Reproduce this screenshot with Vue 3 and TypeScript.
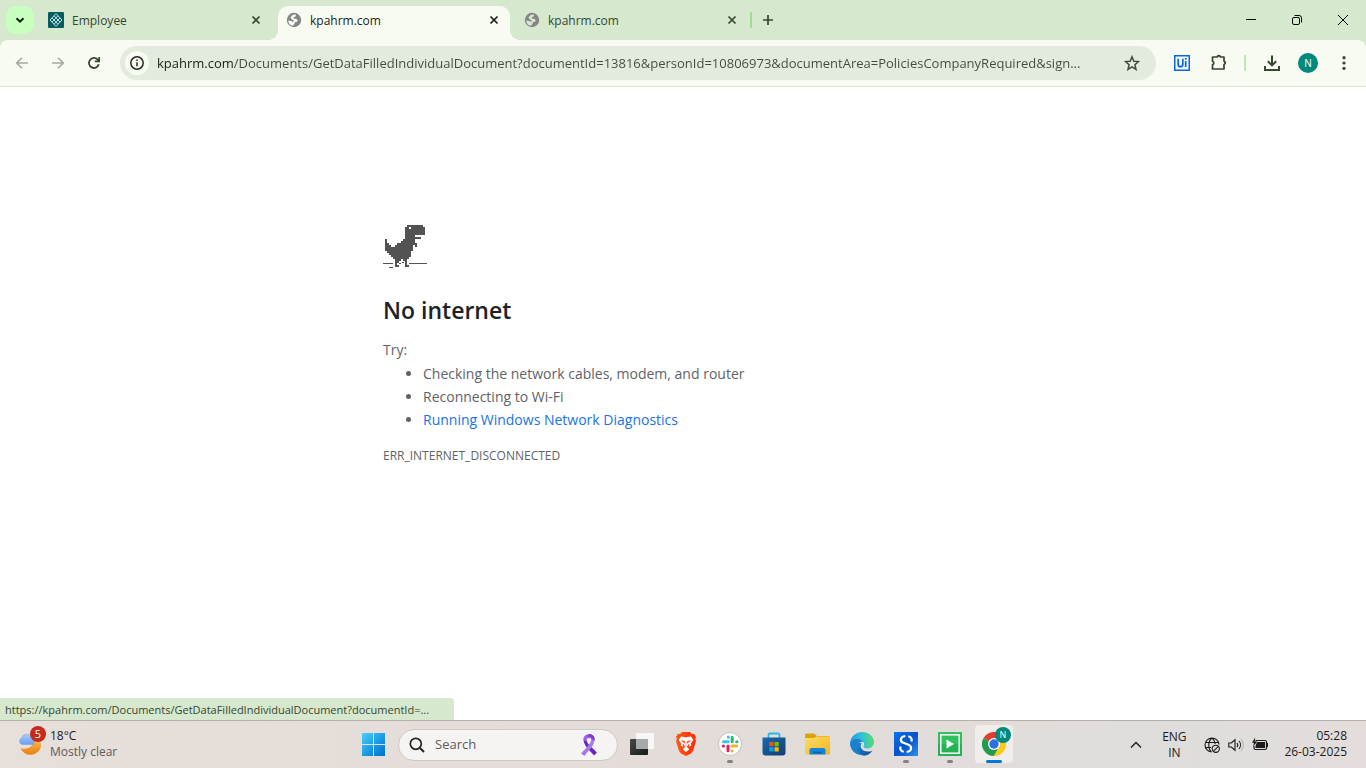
<script setup lang="ts">
import { ref } from 'vue'

interface Tab {
  id: number
  title: string
  icon: 'app' | 'globe'
}

const tabs: Tab[] = [
  { id: 1, title: 'Employee', icon: 'app' },
  { id: 2, title: 'kpahrm.com', icon: 'globe' },
  { id: 3, title: 'kpahrm.com', icon: 'globe' },
]
const activeTab = ref(2)
const url = ref(
  'kpahrm.com/Documents/GetDataFilledIndividualDocument?documentId=13816&personId=10806973&documentArea=PoliciesCompanyRequired&sign...',
)
const query = ref('')

// Dinosaur sprite: one string per row, each mark is a 2px cell
const dino: string[] = [
  '...........########.',
  '..........##.#######',
  '..........##########',
  '..........##########',
  '..........##########',
  '..........#####.....',
  '..........########..',
  '#........######.....',
  '#.......#######.....',
  '##....##########....',
  '###..#########.#....',
  '##############......',
  '##############......',
  '.############.......',
  '..###########.......',
  '...##########.......',
  '....########........',
  '.....###.##.........',
  '.....##...#.........',
  '.....#....#.........',
  '.....##...##........',
]
const dinoPath = dino
  .flatMap((row, y) => [...row].map((c, x) => (c === '#' ? `M${x * 2 + 2} ${y * 2 + 1}h2v2h-2z` : '')))
  .join('')
</script>

<template>
  <div class="screen">
    <header class="tabstrip">
      <button class="tab-search" aria-label="Search tabs">
        <svg width="12" height="12" viewBox="0 0 12 12"><path d="M2.5 4.2 6 7.7l3.500-3.500" fill="none" stroke="#10200f" stroke-width="2" /></svg>
      </button>
      <nav class="tabs">
        <div v-for="t in tabs" :key="t.id" class="tab" :class="{ active: t.id === activeTab }">
          <button class="tab-main" @click="activeTab = t.id">
            <svg v-if="t.icon === 'app'" width="16" height="16" viewBox="0 0 16 16">
              <rect width="16" height="16" rx="1" fill="#045c63" />
              <g fill="none" stroke="#c6e3e2" stroke-width="1">
                <path d="M8 1.700 14 8l-6 6.300L2 8z" />
                <path d="M6 3.800 12 10.100M4 5.900l6 6.300M10 3.800 4 10.100M12 5.900l-6 6.300" />
              </g>
            </svg>
            <svg v-else width="16" height="16" viewBox="0 0 16 16">
              <circle cx="8" cy="8" r="7.200" fill="#848586" />
              <path d="M6.300 3.200C7.500 2.600 9 2.400 10 2.700L9.600 4.500 7.800 5.300v1.400h2.500l1.500 1.800-1.200 1.400H8.900l-.4 2.200-1.700 1.700C4.200 13.400 2.300 11.300 2.200 8.400l3 .6 2 .9.500-1.500-2-1.100-1.300-1.500z" :fill="t.id === activeTab ? '#f7fbf2' : '#d6e8ce'" />
            </svg>
            <span>{{ t.title }}</span>
          </button>
          <button class="tab-close" aria-label="Close tab">
            <svg width="16" height="16" viewBox="0 0 16 16"><path d="m4.500 4.500 7 7m0-7-7 7" stroke="currentColor" stroke-width="1.700" /></svg>
          </button>
        </div>
        <i class="tab-sep"></i>
        <button class="new-tab" aria-label="New tab">
          <svg width="16" height="16" viewBox="0 0 16 16"><path d="M8 3v10M3 8h10" stroke="#36462f" stroke-width="1.700" /></svg>
        </button>
      </nav>
      <div class="window-controls">
        <button aria-label="Minimize"><svg width="12" height="12" viewBox="0 0 12 12"><path d="M1 5.500h10" stroke="#000" /></svg></button>
        <button aria-label="Restore"><svg width="12" height="12" viewBox="0 0 12 12" fill="none" stroke="#000"><rect x="1.500" y="3.500" width="7" height="7" rx="1.500" /><path d="M3.500 1.500H8a2.500 2.500 0 0 1 2.500 2.500v4.500" /></svg></button>
        <button aria-label="Close"><svg width="12" height="12" viewBox="0 0 12 12"><path d="m1 1 10 10M11 1 1 11" stroke="#000" /></svg></button>
      </div>
    </header>

    <section class="toolbar-wrap">
      <div class="toolbar">
        <button class="tool" aria-label="Back"><svg width="16" height="16" viewBox="0 0 16 16"><path d="M14 8H3M8 2.700 2.700 8 8 13.300" fill="none" stroke="#a4aaa0" stroke-width="1.600" /></svg></button>
        <button class="tool" aria-label="Forward"><svg width="16" height="16" viewBox="0 0 16 16"><path d="M2 8h11M8 2.700 13.300 8 8 13.300" fill="none" stroke="#a4aaa0" stroke-width="1.600" /></svg></button>
        <button class="tool" aria-label="Reload"><svg width="16" height="16" viewBox="0 0 16 16"><path d="M12.800 9.300A5 5 0 1 1 11.700 4.600L13 6" fill="none" stroke="#36462f" stroke-width="1.800" /><path d="M14 2v5.200H8.800V5.500h3.500V2z" fill="#36462f" /></svg></button>
        <div class="omnibox">
          <button class="site-info" aria-label="View site information">
            <svg width="16" height="16" viewBox="0 0 16 16"><circle cx="8" cy="8" r="6.200" fill="none" stroke="#222b1f" stroke-width="1.500" /><path d="M8 7.200v4M8 4.500v1.600" stroke="#222b1f" stroke-width="1.500" /></svg>
          </button>
          <input v-model="url" class="url" aria-label="Address" spellcheck="false" />
          <button class="star" aria-label="Bookmark this tab">
            <svg width="16" height="16" viewBox="0 0 16 16"><path d="m8 1.800 1.800 4.400 4.700.4-3.600 3.100 1.100 4.600L8 11.800l-4 2.500 1.100-4.600-3.600-3.100 4.700-.4z" fill="none" stroke="#424b3e" stroke-width="1.500" /></svg>
          </button>
        </div>
        <button class="tool" aria-label="UiPath extension">
          <svg width="16" height="16" viewBox="0 0 16 16"><rect width="16" height="16" fill="#0b63dd" /><rect x="1.500" y="1.500" width="13" height="13" fill="#f6fbff" /><path d="M4.200 3.800v5.400q0 2.500 2.300 2.500t2.300-2.500V3.800M11.700 6v6M11.700 3v1.800" fill="none" stroke="#0b63dd" stroke-width="1.700" /></svg>
        </button>
        <button class="tool" aria-label="Extensions">
          <svg width="18" height="18" viewBox="-1 1 18 18"><path d="M3 4h4.200a1.700 1.700 0 0 1 3.300 0H14v4.200a1.700 1.700 0 0 1 0 3.300V16H2.500v-4.200a1.900 1.900 0 0 0 0-3.600V4z" fill="none" stroke="#36462f" stroke-width="1.700" stroke-linejoin="round" /><path d="M7.200 3.500a1.700 1.700 0 0 1 3.300 0zM14.500 8.200a1.700 1.700 0 0 1 0 3.300z" fill="#36462f" /></svg>
        </button>
        <i class="tool-sep"></i>
        <button class="tool" aria-label="Downloads">
          <svg width="18" height="18" viewBox="0 0 18 18"><path d="M9 1.500v9.700M4.800 7.200 9 11.400l4.200-4.200M2 12v4h14v-4" fill="none" stroke="#36462f" stroke-width="2" /></svg>
        </button>
        <button class="tool" aria-label="Profile"><span class="avatar">N</span></button>
        <button class="tool" aria-label="Menu">
          <svg width="16" height="16" viewBox="0 0 16 16" fill="#36462f"><circle cx="8" cy="2.700" r="1.600" /><circle cx="8" cy="8" r="1.600" /><circle cx="8" cy="13.300" r="1.600" /></svg>
        </button>
      </div>
    </section>

    <main class="page">
      <article class="error">
        <svg class="dino" width="44" height="44" viewBox="0 0 44 44" fill="#535353" shape-rendering="crispEdges">
          <path :d="dinoPath" />
          <path d="M0 39h10v1H0zM26 39h18v1H26zM6 43h4v1H6zM16 39h2v1h-2zM19 38h2v1h-2z" />
        </svg>
        <h1>No internet</h1>
        <p class="try">Try:</p>
        <ul>
          <li>Checking the network cables, modem, and router</li>
          <li>Reconnecting to Wi-Fi</li>
          <li><a href="#">Running Windows Network Diagnostics</a></li>
        </ul>
        <p class="code">ERR_INTERNET_DISCONNECTED</p>
      </article>
      <div class="status">https://kpahrm.com/Documents/GetDataFilledIndividualDocument?documentId=...</div>
    </main>

    <footer class="taskbar">
      <button class="weather">
        <span class="weather-icon">
          <svg width="28" height="32" viewBox="0 0 28 32">
            <defs>
              <linearGradient id="moon" x1="0" y1="0" x2="0" y2="1"><stop offset="0" stop-color="#ffc04d" /><stop offset="1" stop-color="#e97f16" /></linearGradient>
              <linearGradient id="cloud" x1="0" y1="0" x2="0" y2="1"><stop offset="0" stop-color="#a9cbfb" /><stop offset="1" stop-color="#6ba0ef" /></linearGradient>
            </defs>
            <path d="M17 9c4 2 6 4 6 8a10.500 9.500 0 0 1-20.500 2C9 21.500 17 17 17 9z" fill="url(#moon)" />
            <path d="M4 15.500a3.500 3.500 0 0 1-.5-6.500 5.500 5.500 0 0 1 10.500 0h2v6.500z" fill="url(#cloud)" stroke="#6f9ee5" stroke-width=".5" />
          </svg>
          <span class="count">5</span>
        </span>
        <span class="weather-text"><b>18°C</b><span>Mostly clear</span></span>
      </button>

      <nav class="dock">
        <button class="app start" aria-label="Start">
          <svg width="24" height="24" viewBox="0 0 24 24">
            <defs><linearGradient id="win" x1="0" y1="0" x2="1" y2="1"><stop offset="0" stop-color="#4bd0fb" /><stop offset=".6" stop-color="#1594e0" /><stop offset="1" stop-color="#0072cf" /></linearGradient></defs>
            <path d="M0 1h11v11H0zM12 1h11v11H12zM0 13h11v11H0zM12 13h11v11H12z" fill="url(#win)" />
          </svg>
        </button>
        <label class="search">
          <svg width="16" height="16" viewBox="0 0 16 16"><circle cx="6.800" cy="6.800" r="5.500" fill="none" stroke="#222" stroke-width="1.700" /><path d="m11 11 4 4" stroke="#222" stroke-width="2" /></svg>
          <input v-model="query" type="text" placeholder="Search" aria-label="Search" />
          <svg width="18" height="24" viewBox="0 0 18 24">
            <path d="M3.500 6.500C3.500 13 10.500 18 14 22.500L17 19.500C13 15 7 12 6.500 6.500z" fill="#6b25bd" />
            <path d="M14.500 6C14.500 13 8 18 4.500 23L1 20.500C5 16 11 11 11.500 6z" fill="#a07bf0" />
            <path d="M3.500 7.500C2-1 16-1 14.500 7.500L11.500 8c1.500-4-6.500-4-5 0z" fill="#9a63e8" />
            <path d="M6 5.200c1-2.200 5-2.200 6 0l2.300 2.500c.8-4-1-6.500-5.300-6.700z" fill="#7d35cd" />
          </svg>
        </label>
        <button class="app" aria-label="Task view">
          <svg width="24" height="24" viewBox="0 0 24 24">
            <defs><linearGradient id="tv" x1="0" y1="0" x2="1" y2="1"><stop offset="0" stop-color="#484a4a" /><stop offset="1" stop-color="#171919" /></linearGradient></defs>
            <rect y="7" width="18" height="16" rx="1" fill="url(#tv)" /><rect x="6" y="1" width="18" height="16" rx="1" fill="#f7f7f7" /><path d="M6 7h12v10H6z" fill="#a8a9a9" />
          </svg>
        </button>
        <button class="app" aria-label="Brave">
          <svg width="24" height="24" viewBox="0 0 24 24">
            <defs><linearGradient id="brave"><stop stop-color="#ff5a16" /><stop offset="1" stop-color="#ff2a08" /></linearGradient></defs>
            <path d="M8 0h8l2 2 2-.2 2 3-.8 2.200.8 2-3 10-2 2.500L12 24l-5-2.500L5 19 2 9l.8-2L2 4.800l2-3L6 2z" fill="url(#brave)" />
            <path d="m7 4.500 5 .8 5-.8 2.300 3.500-2.500 3.500.5 2-3 2 .8 2L12 20l-3.100-2.500.8-2-3-2 .5-2L4.700 8z" fill="#fff" />
            <path d="m7.500 8.500 3.500 1-.4 1.700zM16.500 8.500l-3.500 1 .4 1.700zM12 10.500v4M9 12l2 3-2 1.200zM15 12l-2 3 2 1.200z" fill="#ff421a" stroke="#ff421a" stroke-width=".5" />
          </svg>
        </button>
        <button class="app" aria-label="Slack">
          <svg width="24" height="24" viewBox="0 0 24 24">
            <circle cx="12" cy="12" r="11.500" fill="#fff" stroke="#c5c0bc" />
            <g stroke-width="3" stroke-linecap="round" fill="none">
              <path d="M10.300 5v.2M5.500 9.800h4.800" stroke="#36c5f0" /><path d="M14.200 5.200v4.600M18.700 9.800h.2" stroke="#2eb67d" />
              <path d="M13.900 13.900h4.800M14 18.700v.2" stroke="#ecb22e" /><path d="M10 14v4.800M5.300 14h.2" stroke="#e01e5a" />
            </g>
          </svg>
          <i class="run"></i>
        </button>
        <button class="app" aria-label="Microsoft Store">
          <svg width="24" height="24" viewBox="0 0 24 24">
            <defs><linearGradient id="store" x1="0" y1="0" x2="1" y2="1"><stop stop-color="#176aae" /><stop offset="1" stop-color="#123e72" /></linearGradient></defs>
            <path d="M6.500 7V3q0-1.500 1.500-1.500h8q1.500 0 1.500 1.500v4" fill="none" stroke="#27b8ef" stroke-width="1.800" />
            <path d="M.5 5.500h23v15q0 3-3 3h-17q-3 0-3-3z" fill="url(#store)" />
            <path d="M7.300 10h4.200v4.200H7.300z" fill="#f25022" /><path d="M12.500 10h4.200v4.200h-4.200z" fill="#7fba00" /><path d="M7.300 15.200h4.200v4.200H7.300z" fill="#00a4ef" /><path d="M12.500 15.200h4.200v4.200h-4.200z" fill="#ffb900" />
          </svg>
        </button>
        <button class="app" aria-label="File Explorer">
          <svg width="26" height="24" viewBox="0 0 26 24">
            <defs><linearGradient id="folder" x1="0" y1="0" x2="1" y2="1"><stop stop-color="#ffdc69" /><stop offset="1" stop-color="#f5b51d" /></linearGradient></defs>
            <path d="M0 3q0-1.500 1.500-1.500H9L12 4h11q2 0 2 2v16H0z" fill="#dca20e" />
            <path d="M0 6h9l2.500-1.500H25V21q0 1.500-1.500 1.500h-22Q0 22.500 0 21z" fill="url(#folder)" />
            <path d="M4.500 22.500V18q0-2 2-2h12q2 0 2 2v4.500z" fill="#1684d8" /><path d="M8 20.500h9" stroke="#0b5eae" stroke-width="1.500" />
          </svg>
        </button>
        <button class="app" aria-label="Edge">
          <svg width="24" height="24" viewBox="0 0 24 24">
            <defs>
              <linearGradient id="edgeTop" x1="0" y1=".5" x2="1" y2=".4"><stop stop-color="#2199df" /><stop offset=".5" stop-color="#31c0dc" /><stop offset="1" stop-color="#5edc67" /></linearGradient>
              <linearGradient id="edgeLow" x1="0" y1="0" x2="1" y2="1"><stop stop-color="#1b8ad6" /><stop offset="1" stop-color="#124a94" /></linearGradient>
            </defs>
            <path d="M0 12A12 12 0 0 1 12 0c7 0 12 4.800 12 10 0 4-3 6.500-6.500 6.500-3 0-4.500-1.200-4-2.200 1.800-3-.5-6.500-4.500-6.500C4.500 7.800.5 10 0 12z" fill="url(#edgeTop)" />
            <path d="M0 12C.5 8.500 5 6.700 9 7.200c2.200.3 4 1.500 4.700 3-4.200-1.700-6.200 1.500-5 5.300C10 19.500 14 22 18 21.500A12 12 0 0 1 0 12z" fill="#1a80cf" />
            <path d="M8.300 11.500C5 16 8 22 14 23.800c3.500-.4 6.800-2.500 8.600-5.400-4 2.300-9.600 1.200-11.500-2.400-.8-1.600-.4-3.600.6-5.100-1.300-.5-2.600-.2-3.400.6z" fill="url(#edgeLow)" />
          </svg>
        </button>
        <button class="app" aria-label="UiPath Studio">
          <svg width="24" height="24" viewBox="0 0 24 24">
            <defs><linearGradient id="studio" x1="0" y1="0" x2="1" y2="1"><stop stop-color="#0b74ef" /><stop offset=".5" stop-color="#0751ca" /><stop offset="1" stop-color="#2992ee" /></linearGradient></defs>
            <path d="M0 0h24v24H0z" fill="url(#studio)" />
            <path d="M11.300 4C6 4.500 5.500 9.500 9.500 10.800l5 2c4 1.700 3.300 6.700-1.800 7.200" fill="none" stroke="#fff" stroke-width="2.200" />
            <path d="M14.300 4.200c2.600.7 3.800 2.800 3.200 5.300M9.700 19.800c-2.600-.7-3.800-2.800-3.200-5.300" fill="none" stroke="#fff" stroke-width="2.200" />
          </svg>
          <i class="run"></i>
        </button>
        <button class="app" aria-label="UiPath Assistant">
          <svg width="24" height="24" viewBox="0 0 24 24"><path d="M0 0h24v24H0z" fill="#30c05c" /><path d="M0 12h24v12H0z" fill="#25b252" /><rect x="2.800" y="2.800" width="18.400" height="18.400" fill="none" stroke="#fff" stroke-width="1.500" /><path d="m8.500 7.500 7.500 4.500-7.500 4.500z" fill="#fff" /></svg>
          <i class="run"></i>
        </button>
        <button class="app current" aria-label="Google Chrome">
          <svg width="24" height="24" viewBox="0 0 24 24">
            <path d="M12 12 1.600 6A12 12 0 0 1 22.400 6z" fill="#e33b2e" /><path d="M12 12 1.600 6A12 12 0 0 0 12 24l5.200-9z" fill="#249b4c" /><path d="M12 12h-.5l5.700 3L12 24A12 12 0 0 0 22.400 6H12z" fill="#fdc912" /><circle cx="12" cy="12" r="6" fill="#fff" /><circle cx="12" cy="12" r="4.700" fill="#2b70e4" />
          </svg>
          <span class="chrome-badge">N</span>
          <i class="run wide"></i>
        </button>
      </nav>

      <div class="tray">
        <button class="chevron" aria-label="Show hidden icons"><svg width="12" height="12" viewBox="0 0 12 12"><path d="m1 8.500 5-5 5 5" fill="none" stroke="#1b1b1b" stroke-width="1.300" /></svg></button>
        <button class="lang"><span>ENG</span><span>IN</span></button>
        <button class="indicators" aria-label="Network, sound and battery">
          <svg width="16" height="16" viewBox="0 0 16 16" fill="none" stroke="#1b1b1b" stroke-width="1.100">
            <path d="M7.500 15A7 7 0 1 1 15 7.500M1.500 5.500h13M1.500 10.500H7M7.500 15C3.800 12 3.800 4 8 1c2.500 2 3 4 3.200 6" /><circle cx="11.800" cy="11.800" r="3.600" /><path d="m9.300 14.300 5-5" />
          </svg>
          <svg width="16" height="16" viewBox="0 0 16 16" fill="none" stroke="#1b1b1b" stroke-width="1.100">
            <path d="M.8 6h2.500L7 2.800v10.400L3.300 10H.8zM9 6c1 1.200 1 2.800 0 4M11 4c2 2.300 2 5.700 0 8" /><path d="M13 2.300c3 3.400 3 8 0 11.400" stroke="#b3b0ae" />
          </svg>
          <svg width="16" height="16" viewBox="1 0 16 16">
            <path d="M4.500 3.500H14q1.500 0 1.500 1.500v6q0 1.500-1.500 1.500H4.500Q3 12.500 3 11V9" fill="none" stroke="#1b1b1b" stroke-width="1.200" /><path d="M6 5h8v6H4.500V9zM16 6h1v4h-1z" fill="#1b1b1b" /><path d="M4.200.5 1 5.800h2L2.200 9.500l4-5H3.800z" fill="#1b1b1b" />
          </svg>
        </button>
        <button class="clock"><span>05:28</span><span>26-03-2025</span></button>
      </div>
    </footer>
  </div>
</template>

<style>
body {
  margin: 0;
}
</style>

<style scoped>
.screen {
  height: 100vh;
  display: flex;
  flex-direction: column;
  overflow: hidden;
  background: #fff;
  font-family: "Open Sans", "Noto Sans", sans-serif;
  font-size: 12px;
}
button {
  border: 0;
  padding: 0;
  background: none;
  font: inherit;
  color: inherit;
  display: flex;
  align-items: center;
  justify-content: center;
}
input {
  border: 0;
  padding: 0;
  outline: 0;
  background: none;
  font: inherit;
  min-width: 0;
}
svg {
  display: block;
  flex: none;
}

/* Tab strip */
.tabstrip {
  height: 40px;
  flex: none;
  display: flex;
  background: #d6e8ce;
}
.tab-search {
  width: 28px;
  height: 28px;
  margin: 6px;
  flex: none;
  border-radius: 10px;
  background: #c8ffbf;
}
.tabs {
  flex: 1;
  min-width: 0;
  display: flex;
  align-items: center;
}
.tab {
  flex: 0 1 232px;
  min-width: 0;
  height: 34px;
  margin: 6px 6px 0 0;
  padding: 0 8px;
  box-sizing: border-box;
  position: relative;
  display: flex;
  align-items: center;
  color: #36462f;
}
.tab > button {
  margin-bottom: 6px;
}
.tab-main {
  flex: 1;
  min-width: 0;
  gap: 8px;
  justify-content: flex-start;
}
.tab-close {
  color: #36462f;
}
.tab.active {
  background: #f7fbf2;
  border-radius: 10px 10px 0 0;
  color: #1a1d18;
}
.tab.active .tab-close {
  color: #1a1d18;
}
.tab.active::before,
.tab.active::after {
  content: "";
  position: absolute;
  bottom: 0;
  width: 10px;
  height: 10px;
}
.tab.active::before {
  right: 100%;
  background: radial-gradient(circle at 0 0, #d6e8ce 10px, #f7fbf2 10px);
}
.tab.active::after {
  left: 100%;
  background: radial-gradient(circle at 100% 0, #d6e8ce 10px, #f7fbf2 10px);
}
.tab-sep {
  width: 2px;
  height: 16px;
  margin: 0 8px 0 -4px;
  border-radius: 1px;
  background: #a0da96;
}
.window-controls {
  display: flex;
}
.window-controls button {
  width: 46px;
}

/* Toolbar */
.toolbar-wrap {
  flex: none;
  background: #d6e8ce;
}
.toolbar {
  height: 46px;
  padding: 0 4px;
  display: flex;
  align-items: center;
  background: #f7fbf2;
  border-radius: 8px 8px 0 0;
  border-bottom: 1px solid #dce4d7;
}
.tool {
  width: 36px;
  height: 34px;
  flex: none;
}
.omnibox {
  flex: 1;
  min-width: 0;
  height: 34px;
  margin: 0 8px;
  padding: 0 16px 0 5px;
  box-sizing: border-box;
  display: flex;
  align-items: center;
  border-radius: 17px;
  background: #e3ebdd;
}
.site-info {
  width: 24px;
  height: 24px;
  flex: none;
  margin-right: 8px;
  border-radius: 50%;
  background: #f7fbf2;
}
.url {
  flex: 1;
  height: 24px;
  margin-right: 16px;
  font-size: 13px;
  color: transparent;
  background: linear-gradient(90deg, #181d17 76px, #434940 76px);
  background-clip: text;
  -webkit-background-clip: text;
}
.tool-sep {
  width: 2px;
  height: 16px;
  margin: 0 8px;
  background: #b6efad;
}
.avatar {
  width: 20px;
  height: 20px;
  border-radius: 50%;
  background: #00897b;
  color: #fff;
  font-size: 10px;
  line-height: 20px;
  text-align: center;
}

/* Error page */
.page {
  flex: 1;
  min-height: 0;
  position: relative;
  color: #5f6368;
  font-size: 14px;
}
.error {
  max-width: 600px;
  margin: 0 auto;
  padding-top: 137px;
}
h1 {
  margin: 24px 0 10px;
  font-size: 23px;
  line-height: 36px;
  font-weight: 600;
  color: #202124;
}
.try {
  margin: 0;
  line-height: 24px;
}
ul {
  margin: 0;
  padding-left: 40px;
  line-height: 23px;
}
a {
  color: #1a73e8;
  text-decoration: none;
}
.code {
  margin: 13px 0 0;
  font-size: 12px;
  line-height: 24px;
}
.status {
  position: absolute;
  left: 0;
  bottom: 0;
  width: 454px;
  height: 22px;
  padding: 0 5px;
  box-sizing: border-box;
  border-radius: 0 4px 0 0;
  background: #d6e8ce;
  color: #36462f;
  font-size: 11px;
  line-height: 23px;
  white-space: nowrap;
  overflow: hidden;
}

/* Taskbar */
.taskbar {
  height: 48px;
  flex: none;
  box-sizing: border-box;
  border-top: 1px solid #b5afac;
  display: grid;
  grid-template-columns: 1fr auto 1fr;
  background: linear-gradient(90deg, #e7dfda, #e3dcd8 50%, #dfdddc 88%, #e4dddc);
  color: #1b1b1b;
}
.weather {
  justify-self: start;
  padding-left: 18px;
  gap: 4px;
}
.weather-icon {
  position: relative;
}
.count {
  position: absolute;
  top: -3px;
  left: 12px;
  width: 16px;
  height: 16px;
  border-radius: 50%;
  background: #c42b1c;
  color: #fff;
  font-size: 11px;
  line-height: 16px;
  text-align: center;
}
.weather-text {
  display: flex;
  flex-direction: column;
  padding-bottom: 2px;
  text-align: left;
  line-height: 16px;
  color: #5d5a58;
}
.weather-text b {
  font-weight: 400;
  color: #1b1b1b;
}
.dock {
  display: flex;
  align-items: center;
  padding-left: 2px;
}
.app {
  width: 44px;
  height: 47px;
  padding-bottom: 1px;
  box-sizing: border-box;
  position: relative;
}
.search {
  width: 220px;
  height: 32px;
  margin: 0 2px;
  padding: 0 19px 0 10px;
  box-sizing: border-box;
  display: flex;
  align-items: center;
  gap: 10px;
  border: 1px solid #cfc9c5;
  border-radius: 16px;
  background: #f6f4f2;
}
.search input {
  flex: 1;
  padding-bottom: 2px;
  font-size: 13px;
}
.search input::placeholder {
  color: #5d5b5a;
  opacity: 1;
}
.run {
  position: absolute;
  bottom: 5px;
  width: 6px;
  height: 3px;
  border-radius: 2px;
  background: #858281;
}
.run.wide {
  width: 16px;
  background: #0078d4;
}
.current::before {
  content: "";
  position: absolute;
  inset: 4px 3px 5px;
  border-radius: 4px;
  background: #f0edeb;
}
.current svg {
  position: relative;
}
.chrome-badge {
  position: absolute;
  top: 6px;
  right: 5px;
  width: 16px;
  height: 16px;
  border-radius: 50%;
  background: #00897b;
  color: #fff;
  font-size: 9px;
  line-height: 16px;
  text-align: center;
}
.tray {
  justify-self: end;
  display: flex;
  padding-right: 19px;
  line-height: 16px;
}
.chevron {
  width: 32px;
}
.lang {
  width: 44px;
  flex-direction: column;
}
.indicators {
  gap: 8px;
  margin: 0 16px 0 8px;
}
.clock {
  flex-direction: column;
  align-items: flex-end;
  padding-bottom: 2px;
}
</style>
